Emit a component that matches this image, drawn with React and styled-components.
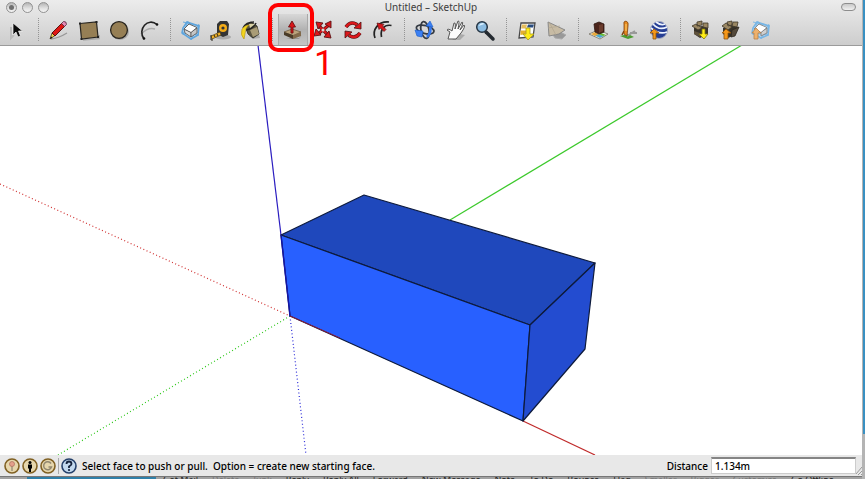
import React, { useState } from "react";
import styled, { createGlobalStyle } from "styled-components";

const GlobalStyle = createGlobalStyle`
  * {
    box-sizing: border-box;
  }

  body {
    margin: 0;
    background: #fff;
    font-family: "Noto Sans", "Open Sans", sans-serif;
    font-size: 10px;
    color: #000;
  }
`;

const Desktop = styled.div`
  display: flex;
  flex-direction: column;
  height: 100vh;
  padding-right: 3px;
  background: linear-gradient(#3990c2, #3990c2) right top / 2px calc(100% - 45px)
    no-repeat #b4b4b4;
`;

const Window = styled.main`
  flex: 1;
  min-height: 0;
  display: flex;
  flex-direction: column;
  background: #fff;
  border-bottom: 1px solid #777;
`;

const Header = styled.header`
  background: linear-gradient(#ececec, #e3e3e3 30%, #cdcdcd);
  border-bottom: 1px solid #9b9b9b;
`;

const TitleBar = styled.div`
  display: grid;
  grid-template-columns: 60px 1fr 60px;
  align-items: center;
  height: 14px;
  padding: 0 6px;
`;

const Lights = styled.div`
  display: flex;
  gap: 5px;
`;

const Light = styled.button`
  display: flex;
  align-items: center;
  justify-content: center;
  width: 11px;
  height: 11px;
  padding: 0;
  border: 1px solid #929292;
  border-radius: 50%;
  background: linear-gradient(#b5b5b5, #e2e2e2 60%, #f4f4f4);

  &::after {
    content: "";
    width: 5px;
    height: 5px;
    border-radius: 50%;
    background: ${props => (props.$edited ? "#6f6f6f" : "transparent")};
  }
`;

const Title = styled.h1`
  margin: 0;
  font-size: 10px;
  font-weight: 400;
  line-height: 14px;
  text-align: center;
  color: #3c3c3c;
`;

const Pill = styled.button`
  justify-self: end;
  width: 15px;
  height: 8px;
  padding: 0;
  border: 1px solid #8d8d8d;
  border-radius: 4px;
  background: linear-gradient(#c9c9c9, #f0f0f0);
`;

const Toolbar = styled.div`
  display: flex;
  height: 31px;
  padding-left: 2px;
`;

const Separator = styled.div`
  width: 12px;
  display: flex;
  justify-content: center;
  padding: 4px 0;

  &::after {
    content: "";
    border-left: 1px dotted #949494;
  }
`;

const ToolSlot = styled.div`
  position: relative;
  width: 30px;
`;

const ToolButton = styled.button`
  display: flex;
  align-items: center;
  justify-content: center;
  width: 100%;
  height: 31px;
  padding: 0;
  border: 0;
  background: ${props =>
    props.$active ? "linear-gradient(#d8d8d8, #b2b2b2 50%, #c4c4c4)" : "none"};
  box-shadow: ${props =>
    props.$active ? "inset 1px 0 #a8a8a8, inset -1px 0 #a8a8a8" : "none"};
`;

const Highlight = styled.div`
  position: absolute;
  top: -11px;
  left: -10px;
  z-index: 1;
  width: 46px;
  height: 49px;
  border: 4px solid #f00;
  border-radius: 10px;
  pointer-events: none;
`;

const StepNumber = styled.span`
  position: absolute;
  top: 38px;
  left: 36px;
  font-family: Roboto, sans-serif;
  font-size: 35px;
  line-height: 24px;
  color: #f00;
`;

const Viewport = styled.section`
  flex: 1;
  min-height: 0;
  overflow: hidden;

  svg {
    display: block;
    width: 100%;
    height: 100%;
  }
`;

const StatusBar = styled.footer`
  display: flex;
  align-items: center;
  height: 21px;
  padding-left: 4px;
  background: #e8e8e8;
`;

const StatusIcons = styled.div`
  display: flex;
  gap: 2px;
`;

const StatusButton = styled.button`
  display: flex;
  width: 16px;
  height: 16px;
  padding: 0;
  border: 0;
  background: none;
`;

const Divider = styled.div`
  width: 1px;
  height: 16px;
  margin: 0 2px;
  background: #aaa;
`;

const Hint = styled.p`
  flex: 1;
  margin: 0 0 0 5px;
  font-weight: 500;
  white-space: pre;
`;

const Measure = styled.label`
  display: flex;
  align-items: center;
  gap: 3px;
  font-weight: 500;
`;

const MeasureInput = styled.input`
  width: 145px;
  height: 17px;
  padding: 0 3px;
  border: 1px solid #ccc;
  border-top: 2px solid #858585;
  background: #fff;
  font: inherit;
  outline: none;
`;

const Grip = styled.svg`
  align-self: flex-end;
  width: 6px;
  height: 10px;
`;

const BackgroundBar = styled.div`
  display: flex;
  gap: 14px;
  height: 2px;
  padding-left: 163px;
  overflow: hidden;
  background: linear-gradient(#2f7fa8, #2f7fa8) 27px 0 / 129px 100% no-repeat
    #a2a2a2;
  font-size: 9px;
  line-height: 6px;
  white-space: nowrap;
`;

const BackgroundItem = styled.span`
  color: ${props => (props.$dim ? "#777" : "#222")};
`;

const icons = {
  select: (
    <>
      <path d="M6 9v11l3-3" fill="none" stroke="#bbb" strokeWidth="2" />
      <path
        d="M8 5v12l3-3 2 5 2.500-1-2-5h4z"
        fill="#0a0a0a"
        stroke="#f5f5f5"
        strokeWidth=".7"
      />
    </>
  ),
  line: (
    <>
      <path d="M4 21q8-1 16-6" fill="none" stroke="#999" strokeWidth="1.300" />
      <path d="M3 21l2-6 3 2.500z" fill="#efd34a" stroke="#3a2b10" strokeWidth=".7" />
      <path d="M3 21l1-2.500 1.500 1.200z" fill="#111" />
      <path d="M5 15L15 5l3 3L8 18z" fill="#df1714" stroke="#4b0908" strokeWidth=".9" />
      <path d="M14.500 5.500l2-2q3-.5 3 3l-2 2z" fill="#e68bb4" stroke="#5c3147" strokeWidth=".9" />
    </>
  ),
  rectangle: (
    <>
      <path d="M6 22l16-1.500V17" fill="none" stroke="#aaa" strokeWidth="1.500" />
      <path d="M3 5.500L19.500 4 21 19 4.500 21z" fill="#967f55" stroke="#28251f" strokeWidth="1.200" />
      <path d="M2 4.500h2v2H2zM18.500 3h2v2h-2zM20 18h2v2h-2zM3.500 20h2v2h-2z" fill="#222" />
    </>
  ),
  circle: (
    <>
      <ellipse cx="13" cy="13.500" rx="9" ry="8.500" fill="#aaa" />
      <circle cx="12" cy="12" r="8.400" fill="#967f55" stroke="#28251f" strokeWidth="1.300" />
    </>
  ),
  arc: (
    <>
      <path d="M4 16q7-7 14-5" fill="none" stroke="#aaa" strokeWidth="1.500" />
      <path d="M7 21C0 11 11-1 20 6.500" fill="none" stroke="#222" strokeWidth="1.600" />
      <circle cx="7" cy="20.500" r="1.300" fill="#111" />
      <circle cx="20" cy="6.500" r="1.300" fill="#111" />
    </>
  ),
  component: (
    <>
      <path d="M8 4l12 4-1 9-7 4-9-6 1-5z" fill="#bcd9f0" stroke="#5fa5dd" strokeWidth="1.600" />
      <path d="M4 4l17 4M3 15l17 2M9 3L4 17M20 6l-8 16" stroke="#5fa5dd" strokeWidth=".9" />
      <path d="M5 11l7 3v5l-6-4z" fill="#ddd" stroke="#555" strokeWidth=".8" />
      <path d="M12 14l6-4v5l-6 4z" fill="#c6c6c6" stroke="#555" strokeWidth=".8" />
      <path d="M5 11l5-5 8 3.500-6 5z" fill="#fff" stroke="#555" strokeWidth=".9" />
    </>
  ),
  tape: (
    <>
      <ellipse cx="14" cy="19" rx="8" ry="2.500" fill="#aaa" />
      <path d="M8 6l3-3h7l2 3-1 11-5 2-6-3z" fill="#333435" />
      <circle cx="14" cy="10" r="4" fill="#f3ac18" />
      <circle cx="14" cy="10" r="1.600" fill="#333" />
      <path d="M11 14l1 3-9 4-1-3z" fill="#f1b127" stroke="#4a3b15" strokeWidth=".7" />
      <path d="M5 17l1 2m2-3 1 2M2 17v5h2" fill="none" stroke="#27231a" />
    </>
  ),
  paint: (
    <>
      <path d="M10 18l10-2 1 4-7 1z" fill="#aaa" />
      <path d="M6 8l6-4 6 4 2 8-6 4-5-4z" fill="#59543f" stroke="#25241f" strokeWidth=".8" />
      <path d="M11 12l7-3 2 7-6 3z" fill="#a99c76" />
      <path d="M4 10q3-6 11-6M7 12q7-1 10-7" fill="none" stroke="#222" strokeWidth="1.500" />
      <path d="M3 11q3-4 7-4-4 3-4 9l-1 5q-4-4-2-10z" fill="#f3d51d" stroke="#af8e15" strokeWidth=".6" />
      <path d="M10 6l6 0-5 4z" fill="#d8d1a7" />
    </>
  ),
  pushPull: (
    <>
      <path d="M5 20h13l3-3-3 4h-8z" fill="#969696" />
      <path d="M3 14l8-3 9 3-8 4z" fill="#b9a27c" stroke="#665338" strokeWidth=".7" />
      <path d="M3 14l9 3v4l-9-4z" fill="#493b28" />
      <path d="M12 17l8-3v4l-8 3z" fill="#81694a" />
      <path d="M10 15V9H7.500L11 3l3.500 6H12v6z" fill="#d8161a" stroke="#6e1113" strokeWidth=".9" />
    </>
  ),
  move: (
    <>
      <path d="M8 8l9 9M18 7L7 16" stroke="#5c1113" strokeWidth="3.200" />
      <path d="M8 8l9 9M18 7L7 16" stroke="#d8181c" strokeWidth="1.800" />
      <path
        d="M5 4l7 1-5 6zM20 3l0 7-6-4zM20 20l-7-1 5-6zM3 18l2-7 5 6z"
        fill="#d8181c"
        stroke="#5c1113"
        strokeWidth=".9"
      />
      <circle cx="12" cy="12" r="1.500" fill="#ddd" />
    </>
  ),
  rotate: (
    <>
      <path d="M5 9q4-6 10-3l1 1M19 15q-4 6-10 3l-1-1" fill="none" stroke="#4c1113" strokeWidth="3.600" />
      <path d="M5 9q4-6 10-3l1 1M19 15q-4 6-10 3l-1-1" fill="none" stroke="#dc171b" strokeWidth="2.400" />
      <path d="M20 4l0 7-7-1zM4 20l0-7 7 1z" fill="#dc171b" stroke="#4c1113" strokeWidth=".8" />
    </>
  ),
  offset: (
    <>
      <path d="M4 20C1 12 7 3 18 4M10.500 19C9 12 13 6 20.500 7.500" fill="none" stroke="#222" strokeWidth="1.700" />
      <path d="M13 13.500L9.500 10 8 11.500 6 5l7 1.500L11.500 8 15 11.500z" fill="#d9171b" stroke="#601113" strokeWidth=".7" />
    </>
  ),
  orbit: (
    <>
      <ellipse cx="12" cy="12" rx="4" ry="8.500" fill="none" stroke="#353b43" strokeWidth="1.800" transform="rotate(-12 12 12)" />
      <ellipse cx="12" cy="11.500" rx="9" ry="4" fill="none" stroke="#353b43" strokeWidth="1.800" transform="rotate(14 12 12)" />
      <path d="M17 7q2 7-3 12" fill="none" stroke="#3477ee" strokeWidth="2.600" />
      <path d="M13 8l4-5 3 6z" fill="#3b80f4" stroke="#1a5bc5" strokeWidth=".6" />
      <path d="M2 12l8 1-1 6-5-1z" fill="#3b80f4" stroke="#1a5bc5" strokeWidth=".6" />
    </>
  ),
  pan: (
    <>
      <path d="M9 22l8-6 5 1-5 5z" fill="#aaa" />
      <path
        d="M5 21l2-7-3-2q1-2 5 1l2-8q2-1 1 6l3-8q2-1 0 8l4-7q2 0-2 8l4-5q2 1-3 8l-5 6z"
        fill="#fbfbfb"
        stroke="#555"
        strokeWidth="1"
      />
    </>
  ),
  zoom: (
    <>
      <path d="M13 14l7 7" stroke="#242a30" strokeWidth="3.500" strokeLinecap="round" />
      <circle cx="9" cy="9" r="5.300" fill="#8cbce1" stroke="#253544" strokeWidth="1.500" />
      <path d="M5.500 8q3-5 6-2z" fill="#d9f0ff" />
    </>
  ),
  getView: (
    <>
      <path d="M6 5h14l-2 14-14 1z" fill="#fff" stroke="#484848" strokeWidth="1.300" />
      <path d="M7 6.500h5l-1 4H6z" fill="#e5bd5b" />
      <path d="M13 6.500h6l-1 3h-6z" fill="#294c7e" />
      <path d="M5.500 12.500h6l-1 3.500-5 1z" fill="#e5b02c" />
      <path d="M11 10h4v6h4l-6 6-5-6h3z" fill="#ffec17" stroke="#a69b1c" strokeWidth=".8" />
    </>
  ),
  terrain: (
    <>
      <path d="M8 17l5-4 8 4-4 4-7-1z" fill="#999" stroke="#aaa" />
      <path d="M3 4l17 8-6 4-10 2z" fill="#c7bba4" stroke="#888" />
      <path d="M4 4l7 13M3 10l12-2" stroke="#b0a58f" strokeWidth=".7" />
    </>
  ),
  placeModel: (
    <>
      <path d="M2 16l9-4 10 4-8 5z" fill="#f3f3e9" stroke="#746f62" strokeWidth=".8" />
      <path d="M7 17l6 3 4-2-9-3z" fill="#4ba9d1" />
      <path d="M14 15l5 2-3 1-5-2z" fill="#64b832" />
      <path d="M4 16l4-2 4 2-4 2z" fill="#e8a83b" />
      <path d="M7 6l5-2 5 2v8l-5 2-4-2z" fill="#4b241b" stroke="#2d1710" strokeWidth=".8" />
      <path d="M12 7l4-1v7l-4 2z" fill="#6b3c2d" />
    </>
  ),
  person: (
    <>
      <path d="M3 18l8-2 6 3-6 2z" fill="#4c9c30" />
      <path d="M10 18l8-5M13 15h7" stroke="#999" strokeWidth="1.800" />
      <path d="M7 13l-2 4" stroke="#82450f" strokeWidth="1.500" />
      <path d="M7 7q-1-4 2-4 3 1 2 5l-1 10-3-2z" fill="#e78a20" stroke="#82450f" strokeWidth=".8" />
      <path d="M9 6v7" stroke="#ffd36e" />
    </>
  ),
  earth: (
    <>
      <circle cx="12" cy="12" r="8.500" fill="#263e94" stroke="#a5abc1" />
      <path d="M6 6q6 7 14 3M4 10q8 7 16 4M9 4q5 4 9 2" fill="none" stroke="#eef4ff" strokeWidth="1.700" />
      <path d="M6 21v-6H3l4-4 5 4H9v6z" fill="#f49719" stroke="#8e540c" strokeWidth=".8" />
    </>
  ),
  getModels: (
    <>
      <path d="M5 10l8-2 6 2v6l-8 4-6-4z" fill="#38332a" />
      <path d="M3 8l4-2 6 4-4 2zM8 4l5-1v4l-5 1zM14 5l5 0v5l-5-1z" fill="#9a8763" stroke="#403728" strokeWidth=".8" />
      <path d="M5 13l6 2v4l-6-3z" fill="#5f523d" />
      <path d="M13 11h3v5h3l-4 5-5-5h3z" fill="#ffed17" stroke="#81790f" strokeWidth=".8" />
    </>
  ),
  shareModel: (
    <>
      <path d="M4 10l9-3 6 2-3 8-7 3-5-4z" fill="#38332a" />
      <path d="M3 8l4-3 6 4-4 3zM8 4l5-1v4l-4 1zM14 4l5 0-1 5-5-1z" fill="#9a8763" stroke="#403728" strokeWidth=".8" />
      <path d="M13 12l7-3-4 9-4 1z" fill="#54493a" stroke="#2d271e" strokeWidth=".8" />
      <path d="M5 21v-6H3l4-4 5 4H9v6z" fill="#f49719" stroke="#8e540c" strokeWidth=".8" />
    </>
  ),
  shareComponent: (
    <>
      <path d="M8 4l12 4-1 9-7 3-9-5 1-5z" fill="#bcd9f0" stroke="#78b6e5" strokeWidth="1.600" />
      <path d="M4 4l17 4M3 15l17 2M9 3L4 17M20 6l-8 15" stroke="#78b6e5" strokeWidth=".9" />
      <path d="M12 14l6-4v5l-6 3z" fill="#d0d0d0" stroke="#777" strokeWidth=".8" />
      <path d="M5 11l5-5 8 3.500-6 5z" fill="#fff" stroke="#777" strokeWidth=".8" />
      <path d="M5 21v-6H3l4-5 5 5H9v6z" fill="#edb16d" stroke="#b98148" strokeWidth=".8" />
    </>
  ),
};

const toolGroups = [
  [["select", "Select"]],
  [
    ["line", "Line"],
    ["rectangle", "Rectangle"],
    ["circle", "Circle"],
    ["arc", "Arc"],
  ],
  [
    ["component", "Make Component"],
    ["tape", "Tape Measure"],
    ["paint", "Paint Bucket"],
  ],
  [
    ["pushPull", "Push/Pull"],
    ["move", "Move"],
    ["rotate", "Rotate"],
    ["offset", "Offset"],
  ],
  [
    ["orbit", "Orbit"],
    ["pan", "Pan"],
    ["zoom", "Zoom"],
  ],
  [
    ["getView", "Get Current View"],
    ["terrain", "Toggle Terrain"],
  ],
  [
    ["placeModel", "Place Model"],
    ["person", "Position Camera"],
    ["earth", "Google Earth"],
  ],
  [
    ["getModels", "Get Models"],
    ["shareModel", "Share Model"],
    ["shareComponent", "Share Component"],
  ],
];

const mailItems = [
  ["Get Mail"],
  ["Delete", true],
  ["Junk", true],
  ["Reply"],
  ["Reply All"],
  ["Forward"],
  ["New Message"],
  ["Note"],
  ["To Do"],
  ["Bounce"],
  ["Flag"],
  ["Smaller", true],
  ["Bigger", true],
  ["Customize", true],
  ["Go Offline"],
];

const Model = () => (
  <svg viewBox="0 46 862 409" preserveAspectRatio="xMinYMin meet">
    <g fill="none" strokeWidth="1.200">
      <path d="M0 184L290 316" stroke="#d03030" strokeDasharray="1 2.500" />
      <path d="M290 316L58 455" stroke="#2fc81c" strokeDasharray="1 2.500" />
      <path d="M290 316L306 455" stroke="#2a2ad8" strokeDasharray="1 2.500" />
      <path d="M450 220L742 45" stroke="#3cc92c" />
      <path d="M523 421L595 455" stroke="#c02a2a" />
      <path d="M258 45L281 235" stroke="#2a1cc0" />
    </g>
    <g stroke="#0d1a3c" strokeWidth="1.200" strokeLinejoin="round">
      <path d="M281 235L364 195 595 263 530 325z" fill="#1f48bc" />
      <path d="M281 235L530 325 523 421 290 316z" fill="#2860ff" />
      <path d="M530 325L595 263 585 349 523 421z" fill="#234cd0" />
    </g>
    <path d="M281 235L290 316" stroke="#1414a8" strokeWidth="1.400" />
    <path d="M290 316L340 338" stroke="#8c1c3c" strokeWidth="1" />
  </svg>
);

const CoinIcon = ({ rim, children }) => (
  <svg width="16" height="16" viewBox="0 0 16 16">
    <circle
      cx="8"
      cy="8"
      r="7"
      fill={rim === "blue" ? "#c3d9ee" : "#e6d6ac"}
      stroke={rim === "blue" ? "#25406a" : "#806022"}
      strokeWidth="1.600"
    />
    {children}
  </svg>
);

const App = () => {
  const [tool, setTool] = useState("pushPull");
  const [distance, setDistance] = useState("1.134m");

  return (
    <Desktop>
      <GlobalStyle />
      <Window>
        <Header>
          <TitleBar>
            <Lights>
              <Light aria-label="Close" $edited />
              <Light aria-label="Minimize" />
              <Light aria-label="Zoom window" />
            </Lights>
            <Title>Untitled – SketchUp</Title>
            <Pill aria-label="Toggle toolbar" />
          </TitleBar>
          <Toolbar role="toolbar">
            {toolGroups.map((group, index) => (
              <React.Fragment key={group[0][0]}>
                {index > 0 && <Separator />}
                {group.map(([id, label]) => (
                  <ToolSlot key={id}>
                    <ToolButton
                      aria-label={label}
                      $active={tool === id}
                      onClick={() => setTool(id)}
                    >
                      <svg width="24" height="24" viewBox="0 0 24 24">
                        {icons[id]}
                      </svg>
                    </ToolButton>
                    {id === "pushPull" && (
                      <>
                        <Highlight />
                        <StepNumber>1</StepNumber>
                      </>
                    )}
                  </ToolSlot>
                ))}
              </React.Fragment>
            ))}
          </Toolbar>
        </Header>
        <Viewport aria-label="Model">
          <Model />
        </Viewport>
        <StatusBar>
          <StatusIcons>
            <StatusButton aria-label="Geo-location">
              <CoinIcon>
                <path d="M8 8v5" stroke="#8f8470" strokeWidth="1.200" />
                <circle cx="8" cy="6" r="2.500" fill="#e5a08c" stroke="#ad6d5c" strokeWidth=".7" />
              </CoinIcon>
            </StatusButton>
            <StatusButton aria-label="Credits">
              <CoinIcon>
                <circle cx="8" cy="4.500" r="1.500" />
                <path d="M6 6.500h4v4H9V14H7v-3.500H6z" />
              </CoinIcon>
            </StatusButton>
            <StatusButton aria-label="Sign in">
              <CoinIcon>
                <path d="M11 5.500a4 4 0 1 0 .5 3.500H8.500" fill="none" stroke="#91876f" strokeWidth="1.400" />
              </CoinIcon>
            </StatusButton>
          </StatusIcons>
          <Divider />
          <StatusButton aria-label="Help">
            <CoinIcon rim="blue">
              <path d="M5.500 6q0-2.500 2.500-2.500T10.500 6Q10.500 7 8 8.500V10" fill="none" stroke="#16233c" strokeWidth="1.800" />
              <circle cx="8" cy="12" r="1.100" fill="#16233c" />
            </CoinIcon>
          </StatusButton>
          <Hint>
            {"Select face to push or pull.  Option = create new starting face."}
          </Hint>
          <Measure>
            Distance
            <MeasureInput
              value={distance}
              onChange={event => setDistance(event.target.value)}
            />
          </Measure>
          <Grip viewBox="0 0 6 10">
            <path d="M0 8l6-7M2 9l4-4M5 9l2-2" stroke="#999" />
          </Grip>
        </StatusBar>
      </Window>
      <BackgroundBar>
        {mailItems.map(([label, dim]) => (
          <BackgroundItem key={label} $dim={dim}>
            {label}
          </BackgroundItem>
        ))}
      </BackgroundBar>
    </Desktop>
  );
};

export default App;
